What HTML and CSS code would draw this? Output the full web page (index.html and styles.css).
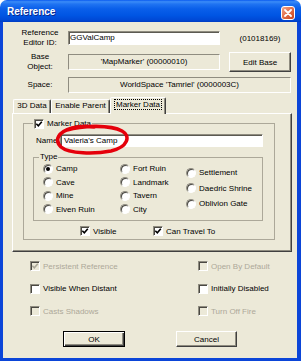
FILE: index.html
```html
<!DOCTYPE html>
<html lang="en">
<head>
<meta charset="UTF-8">
<title>Reference</title>
<link rel="stylesheet" href="styles.css">
</head>
<body>
<div class="window">
    <div class="titlebar">
        <span class="title">Reference</span>
        <span class="close">
            <svg width="8" height="8" viewBox="0 0 8 8"><path d="M1 1L7 7M7 1L1 7" stroke="#fff" stroke-width="1.8" stroke-linecap="round"/></svg>
        </span>
    </div>
    <div class="client">
        <div class="ref-form">
            <div class="row row-id">
                <div class="lbl">Reference<br>Editor ID:</div>
                <div class="field edit">GGValCamp</div>
                <div class="side">(01018169)</div>
            </div>
            <div class="row row-base">
                <div class="lbl">Base<br>Object:</div>
                <div class="field static">'MapMarker' (00000010)</div>
                <button class="btn side-btn">Edit Base</button>
            </div>
            <div class="row row-space">
                <div class="lbl">Space:</div>
                <div class="field static wide">WorldSpace 'Tamriel' (0000003C)</div>
            </div>
        </div>

        <div class="tabs">
            <div class="tab-strip">
                <div class="tab t1">3D Data</div>
                <div class="tab t2">Enable Parent</div>
                <div class="tab t3 active"><span class="focus">Marker Data</span></div>
            </div>
            <div class="tab-panel">
                <fieldset class="group marker">
                    <legend class="opt">
                        <span class="check"><svg viewBox="0 0 8 8"><path d="M1.3 3.8L3.3 5.8L6.8 1.8"/></svg></span>
                        <span>Marker Data</span>
                    </legend>
                    <div class="name-row">
                        <span class="name-lbl">Name</span>
                        <div class="field edit name">Valeria's Camp</div>
                    </div>
                    <fieldset class="group type">
                        <legend>Type</legend>
                        <div class="type-cols">
                            <div class="col c1">
                                <div class="opt"><span class="radio on"></span>Camp</div>
                                <div class="opt"><span class="radio"></span>Cave</div>
                                <div class="opt"><span class="radio"></span>Mine</div>
                                <div class="opt"><span class="radio"></span>Elven Ruin</div>
                            </div>
                            <div class="col c2">
                                <div class="opt"><span class="radio"></span>Fort Ruin</div>
                                <div class="opt"><span class="radio"></span>Landmark</div>
                                <div class="opt"><span class="radio"></span>Tavern</div>
                                <div class="opt"><span class="radio"></span>City</div>
                            </div>
                            <div class="col c3">
                                <div class="opt"><span class="radio"></span>Settlement</div>
                                <div class="opt"><span class="radio"></span>Daedric Shrine</div>
                                <div class="opt"><span class="radio"></span>Oblivion Gate</div>
                            </div>
                        </div>
                    </fieldset>
                    <div class="vis-row">
                        <div class="opt vis"><span class="check"><svg viewBox="0 0 8 8"><path d="M1.3 3.8L3.3 5.8L6.8 1.8"/></svg></span>Visible</div>
                        <div class="opt"><span class="check"><svg viewBox="0 0 8 8"><path d="M1.3 3.8L3.3 5.8L6.8 1.8"/></svg></span>Can Travel To</div>
                    </div>
                </fieldset>
            </div>
        </div>

        <div class="flags">
            <div class="opt off"><span class="check"><svg viewBox="0 0 8 8"><path d="M1.3 3.8L3.3 5.8L6.8 1.8"/></svg></span>Persistent Reference</div>
            <div class="opt off"><span class="check"></span>Open By Default</div>
            <div class="opt"><span class="check"></span>Visible When Distant</div>
            <div class="opt"><span class="check"></span>Initially Disabled</div>
            <div class="opt off"><span class="check"></span>Casts Shadows</div>
            <div class="opt off"><span class="check"></span>Turn Off Fire</div>
        </div>

        <div class="buttons">
            <button class="btn default">OK</button>
            <button class="btn cancel">Cancel</button>
        </div>
    </div>

    <!-- red marker scribble drawn over the name box -->
    <svg class="scribble" width="80" height="32" viewBox="0 0 80 32">
        <path d="M14 6C30 1 58 1 69 7C78 12 75 23 58 27C42 30 16 30 8 23C1 16 5 8 19 4C27 2 34 2 41 3" fill="none" stroke="#e5000b" stroke-width="3.6" stroke-linecap="round" stroke-linejoin="round"/>
    </svg>
</div>
</body>
</html>
```

FILE: styles.css
```css
body {
    margin: 0;
    background: #fff;
    font-family: "Liberation Sans", Arial, sans-serif;
    font-size: 8px;
    color: #000;
}
.window {
    position: relative;
    width: 301px;
    height: 361px;
    display: flex;
    flex-direction: column;
}
.titlebar {
    height: 22px;
    box-sizing: border-box;
    display: flex;
    align-items: center;
    justify-content: space-between;
    padding: 0 6px 0 7px;
    border-radius: 7px 7px 0 0;
    background: linear-gradient(to bottom, #0a5af0 0%, #3b8cf7 8%, #2074f2 18%, #0a5fea 40%, #0055e3 70%, #0049d6 90%, #003cc2 100%);
}
.title {
    color: #fff;
    font-weight: bold;
    font-size: 10px;
    margin-top: 1px;
    text-shadow: 1px 1px #0c2a8c;
}
.close {
    width: 14px;
    height: 14px;
    box-sizing: border-box;
    margin-top: 4px;
    border: 1px solid #fff;
    border-radius: 3px;
    background: linear-gradient(135deg, #f2a88e 0%, #e2714c 45%, #c9441d 100%);
    display: flex;
    align-items: center;
    justify-content: center;
}
.client {
    flex: 1;
    background: #ece9d8;
    border: 3px solid #0b45d8;
    border-top: 0;
    border-right-width: 4px;
}

/* top fields */
.ref-form {
    padding: 5px 0 0 13px;
}
.row {
    display: flex;
    align-items: center;
}
.row-id {
    height: 22px;
}
.row-base {
    height: 24px;
    margin-top: 1px;
}
.row-space {
    height: 18px;
    margin-top: 2px;
}
.lbl {
    width: 48px;
    margin-right: 4px;
    text-align: center;
    line-height: 10px;
}
.field {
    box-sizing: border-box;
    width: 152px;
    border: 1px solid;
    border-color: #8f8c80 #fff #fff #8f8c80;
    white-space: nowrap;
    overflow: hidden;
}
.edit {
    background: #fff;
    height: 14px;
    line-height: 12px;
    padding-left: 1px;
    box-shadow: inset 1px 1px #5c5a52;
}
.static {
    height: 16px;
    line-height: 14px;
    text-align: center;
}
.wide {
    width: 223px;
}
.side {
    width: 62px;
    margin-left: 9px;
    text-align: center;
}
.btn {
    font: inherit;
    color: #000;
    background: #ece9d8;
    box-sizing: border-box;
    border: 1px solid;
    border-color: #fff #404040 #404040 #fff;
    box-shadow: inset -1px -1px #8f8c80;
    padding: 0;
}
.side-btn {
    width: 62px;
    height: 20px;
    margin-left: 9px;
}

/* tabs */
.tabs {
    margin: 3px 0 0 9px;
    width: 280px;
}
.tab-strip {
    display: flex;
    align-items: flex-end;
    height: 16px;
    padding-left: 1px;
}
.tab {
    box-sizing: border-box;
    height: 14px;
    border: 1px solid;
    border-bottom: 0;
    border-color: #fff #404040 transparent #fff;
    border-radius: 2px 2px 0 0;
    box-shadow: inset -1px 0 #8f8c80;
    text-align: center;
    line-height: 12px;
}
.t1 {
    width: 38px;
}
.t2 {
    width: 59px;
}
.t3 {
    width: 56px;
}
.tab.active {
    position: relative;
    z-index: 1;
    height: 17px;
    margin-bottom: -1px;
    background: #ece9d8;
    line-height: 13px;
}
.focus {
    border: 1px dotted #000;
    padding: 0 1px;
}
.tab-panel {
    box-sizing: border-box;
    height: 139px;
    border: 1px solid;
    border-color: #fff #404040 #404040 #fff;
    box-shadow: inset -1px -1px #8f8c80;
    padding: 4px 0 0 10px;
}

/* group boxes */
.group {
    margin: 0;
    padding: 0;
    min-width: 0;
    box-sizing: border-box;
    border: 1px solid #aca899;
}
.group legend {
    padding: 0 1px;
}
.marker {
    width: 252px;
    padding-bottom: 3px;
}
.marker > legend {
    margin-left: 9px;
    height: 11px;
}
.name-row {
    display: flex;
    align-items: center;
    height: 13px;
    margin: 5px 0 0 12px;
}
.name-lbl {
    width: 24px;
}
.name {
    width: 203px;
    height: 13px;
    line-height: 11px;
    padding-left: 3px;
}
.type {
    width: 230px;
    margin: 5px 0 0 9px;
    padding: 0 0 4px 9px;
}
.type > legend {
    margin-left: -4px;
    line-height: 10px;
}
.type-cols {
    display: flex;
}
.col {
    display: flex;
    flex-direction: column;
}
.c1 {
    width: 77px;
}
.c2 {
    width: 66px;
}
.c1 .opt, .c2 .opt {
    height: 13.5px;
}
.c3 {
    padding-top: 3px;
}
.c3 .opt {
    height: 15.5px;
}
.vis-row {
    display: flex;
    height: 10px;
    margin: 5px 0 0 56px;
}
.vis {
    width: 73px;
}

/* check boxes and radios */
.opt {
    display: flex;
    align-items: center;
    gap: 3px;
    white-space: nowrap;
}
.check, .radio {
    flex: none;
    box-sizing: border-box;
    width: 10px;
    height: 10px;
    background: #fff;
    border: 1px solid;
    border-color: #8f8c80 #fff #fff #8f8c80;
    box-shadow: inset 1px 1px #4a4842;
    display: flex;
    align-items: center;
    justify-content: center;
}
.check svg {
    width: 8px;
    height: 8px;
}
.check path {
    fill: none;
    stroke: #000;
    stroke-width: 1.6;
}
.radio {
    border-radius: 50%;
}
.radio.on::after {
    content: "";
    width: 4px;
    height: 4px;
    border-radius: 50%;
    background: #000;
}
.off {
    color: #aca899;
}
.off .check {
    background: #ece9d8;
}
.off .check path {
    stroke: #aca899;
}

/* lower options */
.flags {
    display: grid;
    grid-template-columns: 168px auto;
    grid-auto-rows: 10px;
    row-gap: 12.5px;
    margin-top: 9px;
    padding-left: 27px;
}
.buttons {
    display: flex;
    gap: 51px;
    margin-top: 15px;
    padding-left: 60px;
}
.buttons .btn {
    height: 16px;
}
.default {
    width: 62px;
    border: 1px solid #000;
    box-shadow: inset 1px 1px #fff, inset -1px -1px #404040, inset -2px -2px #8f8c80;
}
.cancel {
    width: 61px;
}
.scribble {
    position: absolute;
    left: 53px;
    top: 124px;
}
```
